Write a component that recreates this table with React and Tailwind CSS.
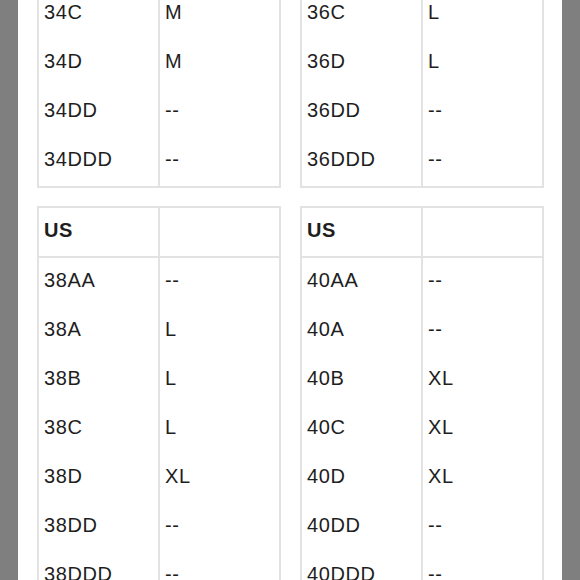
import React from 'react';

const TOP_LEFT = [
  ['34C', 'M'],
  ['34D', 'M'],
  ['34DD', '--'],
  ['34DDD', '--'],
];

const TOP_RIGHT = [
  ['36C', 'L'],
  ['36D', 'L'],
  ['36DD', '--'],
  ['36DDD', '--'],
];

const BOTTOM_LEFT = [
  ['38AA', '--'],
  ['38A', 'L'],
  ['38B', 'L'],
  ['38C', 'L'],
  ['38D', 'XL'],
  ['38DD', '--'],
  ['38DDD', '--'],
];

const BOTTOM_RIGHT = [
  ['40AA', '--'],
  ['40A', '--'],
  ['40B', 'XL'],
  ['40C', 'XL'],
  ['40D', 'XL'],
  ['40DD', '--'],
  ['40DDD', '--'],
];

function Row({ size, fit }) {
  return (
    <div className="grid grid-cols-[119px_1fr] h-[49px]">
      <div className="pl-[5px] pt-[10px] leading-[24px]">{size}</div>
      <div className="border-l-2 border-[#e2e2e2] pl-[5px] pt-[10px] leading-[24px]">{fit}</div>
    </div>
  );
}

function SizeTable({ rows, header, cut }) {
  return (
    <div
      className={
        cut
          ? 'border-x-2 border-b-2 border-[#e2e2e2]'
          : 'border-2 border-[#e2e2e2]'
      }
    >
      {header && (
        <div className="grid grid-cols-[119px_1fr] h-[50px] border-b-2 border-[#e2e2e2]">
          <div className="pl-[5px] pt-[10px] leading-[24px] font-semibold">US</div>
          <div className="border-l-2 border-[#e2e2e2]" />
        </div>
      )}
      {rows.map(([size, fit]) => (
        <Row key={size} size={size} fit={fit} />
      ))}
    </div>
  );
}

export default function App() {
  return (
    <div className="w-[580px] h-[580px] overflow-hidden bg-[#7f7f7f] flex justify-center">
      <div
        className="w-[544px] h-full bg-white pl-[19px] pr-[18px] text-[20px] text-[#1e1e1e] tracking-[0.6px]"
        style={{ fontFamily: '"Liberation Sans", Arial, sans-serif' }}
      >
        <div className="grid grid-cols-2 gap-[19px] -mt-[10px]">
          <SizeTable rows={TOP_LEFT} cut />
          <SizeTable rows={TOP_RIGHT} cut />
        </div>
        <div className="grid grid-cols-2 gap-[19px] mt-[18px]">
          <SizeTable rows={BOTTOM_LEFT} header />
          <SizeTable rows={BOTTOM_RIGHT} header />
        </div>
      </div>
    </div>
  );
}
